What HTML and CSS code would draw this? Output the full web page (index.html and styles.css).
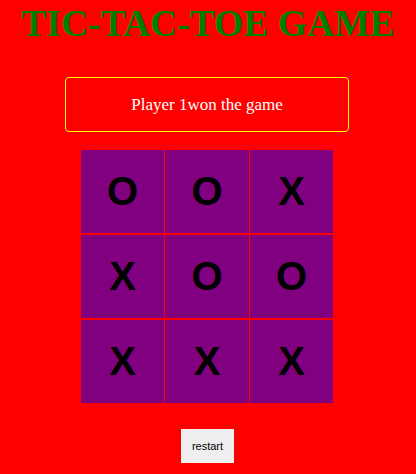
FILE: index.html
```html
<!DOCTYPE html>
<html>
<head>
<meta charset="utf-8">
<link rel="stylesheet" href="styles.css">
</head>
<body>
<h1 class="title">TIC-TAC-TOE GAME</h1>
<div class="msg">Player 1won the game</div>
<div class="board">
  <div class="cell">O</div><div class="cell">O</div><div class="cell">X</div>
  <div class="cell">X</div><div class="cell">O</div><div class="cell">O</div>
  <div class="cell">X</div><div class="cell">X</div><div class="cell">X</div>
</div>
<div class="actions"><button class="restart">restart</button></div>
</body>
</html>
```
FILE: styles.css
```css
html, body { margin: 0; padding: 0; }
body {
  background: #ff0000;
  width: 416px;
  height: 474px;
  overflow: hidden;
  font-family: "Liberation Serif", "Times New Roman", serif;
}
.title {
  margin: 0;
  padding-top: 2px;
  text-align: center;
  color: #008000;
  font-size: 37.6px;
  font-weight: bold;
  line-height: 44px;
}
.msg {
  margin: 31px 0 0 65px;
  width: 282px;
  height: 53px;
  border: 1px solid #ffff00;
  border-radius: 4px;
  display: flex;
  align-items: center;
  justify-content: center;
  color: #ffffff;
  font-size: 17px;
}
.board {
  margin: 18px 0 0 81px;
  width: 252px;
  display: grid;
  grid-template-columns: 83px 84px 83px;
  grid-template-rows: 83px 83px 83px;
  column-gap: 1px;
  row-gap: 2px;
}
.cell {
  background: #800080;
  color: #000000;
  font-family: "Liberation Sans", Arial, sans-serif;
  font-weight: bold;
  font-size: 40px;
  display: flex;
  align-items: center;
  justify-content: center;
}
.actions {
  margin: 26px 0 0 181px;
}
.restart {
  width: 53px;
  height: 34px;
  border: none;
  background: #efefef;
  color: #000;
  font-family: "Liberation Sans", Arial, sans-serif;
  font-size: 11px;
  padding: 0;
  border-radius: 0;
}
```
